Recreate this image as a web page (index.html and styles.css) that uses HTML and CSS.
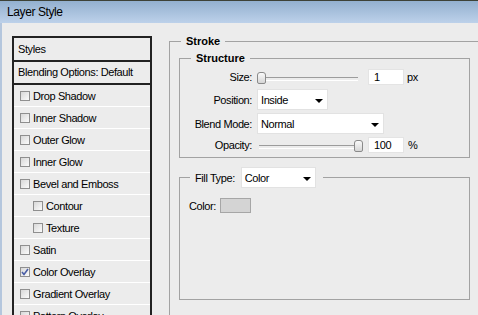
FILE: index.html
```html
<!DOCTYPE html>
<html lang="en">
<head>
  <meta charset="UTF-8">
  <meta name="viewport" content="width=device-width, initial-scale=1.0">
  <title>Layer Style</title>
  <link rel="stylesheet" href="styles.css">
</head>
<body>

  <div class="title-bar">Layer Style</div>

  <div class="window">
    <div class="styles-list">
      <div class="list-head">Styles</div>
      <div class="list-head blend">Blending Options: Default</div>
      <div class="list-item"><span class="check"></span>Drop Shadow</div>
      <div class="list-item"><span class="check"></span>Inner Shadow</div>
      <div class="list-item"><span class="check"></span>Outer Glow</div>
      <div class="list-item"><span class="check"></span>Inner Glow</div>
      <div class="list-item"><span class="check"></span>Bevel and Emboss</div>
      <div class="list-item sub"><span class="check"></span>Contour</div>
      <div class="list-item sub"><span class="check"></span>Texture</div>
      <div class="list-item"><span class="check"></span>Satin</div>
      <div class="list-item"><span class="check checked"><svg width="8" height="8" viewBox="0 0 8 8"><polyline points="1,4 3,6.5 7,1" fill="none" stroke="#4b5fa6" stroke-width="1.6"/></svg></span>Color Overlay</div>
      <div class="list-item"><span class="check"></span>Gradient Overlay</div>
      <div class="list-item"><span class="check"></span>Pattern Overlay</div>
    </div>

    <div class="settings">
      <fieldset class="group stroke">
        <legend>Stroke</legend>

        <fieldset class="group inner structure">
          <legend>Structure</legend>

          <div class="row size-row">
            <span class="field-label">Size:</span>
            <div class="slider"><span class="thumb" style="--pos: 0"></span></div>
            <div class="num-input">1</div>
            <span class="unit">px</span>
          </div>

          <div class="row select-row">
            <span class="field-label">Position:</span>
            <div class="dropdown narrow">Inside</div>
          </div>

          <div class="row select-row blend-row">
            <span class="field-label">Blend Mode:</span>
            <div class="dropdown wide">Normal</div>
          </div>

          <div class="row opacity-row">
            <span class="field-label">Opacity:</span>
            <div class="slider"><span class="thumb" style="--pos: 1"></span></div>
            <div class="num-input">100</div>
            <span class="unit pct">%</span>
          </div>
        </fieldset>

        <fieldset class="group inner fill">
          <legend class="fill-legend">
            <span class="fill-label">Fill Type:</span>
            <div class="dropdown fill-select">Color</div>
          </legend>
          <div class="fill-body">
            <div class="color-row">
              <span>Color:</span>
              <span class="swatch"></span>
            </div>
          </div>
        </fieldset>
      </fieldset>
    </div>
  </div>

</body>
</html>
```

FILE: styles.css
```css
* {
  box-sizing: border-box;
}

body {
  margin: 0;
  width: 478px;
  height: 315px;
  overflow: hidden;
  background: #ececec;
  font-family: 'Liberation Sans', Arial, sans-serif;
  font-size: 11px;
  letter-spacing: -0.4px;
  color: #000;
}

.title-bar {
  height: 23px;
  border-top: 1px solid #3d4237;
  background: linear-gradient(#93b0cf, #bdd1ea); /* Win7 style caption */
  padding-left: 7px;
  font-size: 12px;
  line-height: 22px;
}

.window {
  display: flex;
  align-items: flex-start;
  border-left: 2px solid #b4c6dd;
  padding: 11px 0 0 10px;
  height: 292px;
}

/* Left list of effects */
.styles-list {
  flex: none;
  width: 140px;
  margin-top: 2px;
  border: 2px solid #222;
}

.list-head {
  height: 24px;
  line-height: 22px;
  padding-left: 4px;
  border-bottom: 2px solid #222;
}

.list-head.blend {
  height: 23px;
  line-height: 21px;
}

.list-item {
  height: 22px;
  display: flex;
  align-items: center;
  padding-left: 6px;
  border-bottom: 1px solid #fff;
}

.list-item.sub {
  padding-left: 19px;
}

.check {
  width: 10px;
  height: 10px;
  margin-right: 3px;
  border: 1px solid #8f8f8f;
  background: linear-gradient(135deg, #d8d8d8, #fbfbfb);
  display: flex;
  align-items: center;
  justify-content: center;
}

/* Right settings */
.settings {
  margin-left: 17px;
}

.group {
  margin: 0;
  padding: 0;
  border: 1px solid #a2a2a2;
}

.group legend {
  padding: 0 5px;
  margin-left: 11px;
  font-weight: bold;
  line-height: 14px;
  letter-spacing: 0;
}

.stroke {
  width: 330px;
  padding-bottom: 24px;
}

.inner {
  width: 291px;
  margin-left: 9px;
}

.structure {
  margin-top: 3px;
  padding-bottom: 4px;
}

.row {
  display: flex;
  align-items: center;
}

.field-label {
  width: 72px;
  margin-right: 5px;
  text-align: right;
}

.size-row {
  height: 16px;
  margin-top: 4px;
}

.select-row {
  height: 21px;
  margin-top: 4px;
}

.blend-row {
  margin-top: 3px;
}

.opacity-row {
  height: 16px;
  margin-top: 3px;
}

.slider {
  position: relative;
  width: 106px;
  height: 16px;
}

.slider::before {
  content: "";
  position: absolute;
  left: 2px;
  right: 5px;
  top: 8px;
  height: 2px;
  border-top: 1px solid #9c9c9c;
  border-bottom: 1px solid #fff;
}

.thumb {
  position: absolute;
  top: 3px;
  left: calc((100% - 9px) * var(--pos));
  width: 9px;
  height: 12px;
  border: 1px solid #8a8a8a;
  border-radius: 3px 3px 2px 2px;
  background: linear-gradient(#fafafa, #d6d6d6);
}

.num-input {
  width: 36px;
  height: 16px;
  margin-left: 5px;
  padding-left: 5px;
  line-height: 15px;
  background: #fff;
  border: 1px solid #e4e4e4;
}

.unit {
  margin-left: 3px;
}

.unit.pct {
  margin-left: 4px;
}

.dropdown {
  position: relative;
  height: 21px;
  line-height: 21px;
  padding-left: 3px;
  background: #fff;
  border: 1px solid #e2e2e2;
}

.dropdown::after {
  content: "";
  position: absolute;
  right: 4px;
  top: 9px;
  border-top: 4px solid #000;
  border-left: 4px solid transparent;
  border-right: 4px solid transparent;
}

.dropdown.narrow {
  width: 71px;
}

.dropdown.wide {
  width: 127px;
}

/* Fill type group */
.fill {
  margin-top: 9px;
}

.group .fill-legend {
  display: flex;
  align-items: center;
  height: 21px;
  margin-left: 10px;
  padding: 0 7px 0 5px;
  font-weight: normal;
  letter-spacing: -0.4px;
}

.fill-label {
  margin-right: 6px;
}

.fill-select {
  width: 75px;
}

.fill-body {
  height: 111px;
  padding: 10px 0 0 9px;
}

.color-row {
  display: flex;
  align-items: center;
  height: 15px;
}

.swatch {
  width: 31px;
  height: 15px;
  margin-left: 4px;
  background: #d4d4d4;
  border: 1px solid #a6a6a6;
}
```
